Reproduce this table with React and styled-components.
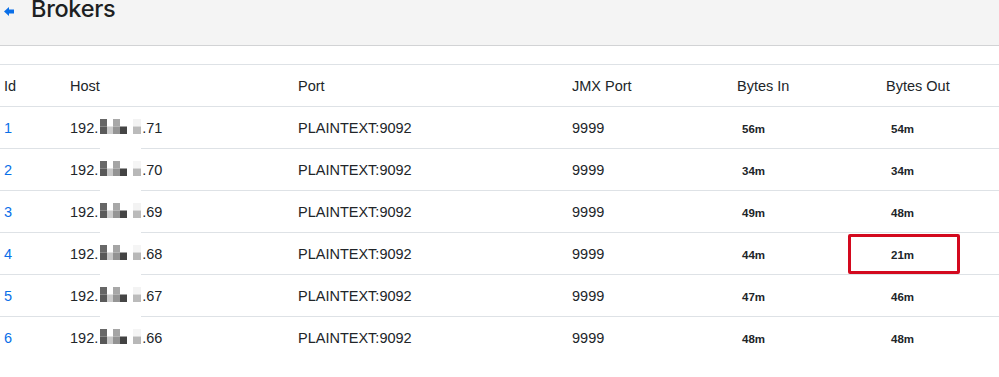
import React from "react"
import styled, { createGlobalStyle } from "styled-components"

const GlobalStyle = createGlobalStyle`
  body {
    margin: 0;
    background: #fff;
    font-family: "Liberation Sans", Arial, sans-serif;
    color: #212529;
  }
`

const Page = styled.div`
  width: 999px;
  height: 377px;
  overflow: hidden;
  background: #fff;
`

const Header = styled.div`
  height: 45px;
  background: #f4f4f4;
  border-bottom: 1px solid #d2d3d5;
  display: flex;
  align-items: flex-start;
  padding-left: 4px;
`

const Back = styled.svg`
  width: 10px;
  height: 9px;
  margin-top: 7px;
  margin-right: 17px;
  flex: none;
`

const Title = styled.h1`
  margin: 0;
  font-family: Inter, "Liberation Sans", sans-serif;
  font-size: 23.5px;
  line-height: 17px;
  font-weight: 500;
  letter-spacing: -0.3px;
  color: #1d1f22;
`

const Spacer = styled.div`
  height: 18px;
`

const Table = styled.div`
  display: flex;
  flex-direction: column;
  font-size: 14.5px;
`

const Row = styled.div`
  display: grid;
  grid-template-columns: 66px 228px 274px 165px 149px 1fr;
  height: 41px;
  border-top: ${p => (p.$head ? "1px solid #dee2e6" : "none")};
  border-bottom: ${p => (p.$last ? "none" : "1px solid #dee2e6")};
`

const Cell = styled.div`
  position: relative;
  display: flex;
  align-items: center;
  padding-left: 4px;
  white-space: nowrap;
`

const IdLink = styled.a`
  color: #0a6fe8;
  text-decoration: none;
`

const Bytes = styled.span`
  padding: 3px 0 0 5px;
  font-size: 11.5px;
  font-weight: 700;
`

const MosaicBox = styled.span`
  position: relative;
  display: inline-block;
  width: 41px;
  height: 15px;
  margin: -3px 1px 0 2px;
  align-self: center;
`

const MosaicSvg = styled.svg`
  position: absolute;
  left: 0;
  top: 0;
  width: 41px;
  height: 34px;
`

const Highlight = styled.div`
  position: absolute;
  left: -34px;
  top: 1px;
  width: 112px;
  height: 40px;
  box-sizing: border-box;
  border: 3px solid #d3091e;
  border-radius: 2px;
  pointer-events: none;
`

const palettes = [
  ["#666666", "#5a5a5a", "#fff", "#cccccc", "#a8a8a8", "#959595", "#fff", "#454545", "#fff", "#fff", "#f3f3f3", "#bbbbbb"],
  ["#686868", "#585858", "#fff", "#c8c8c8", "#a5a5a5", "#939393", "#fff", "#434343", "#fff", "#fff", "#f5f5f5", "#b8b8b8"],
]

const Mosaic = ({ v }) => {
  const c = palettes[v % 2]
  const xs = [0, 7, 13, 20, 27, 33]
  const ws = [7, 6, 7, 7, 6, 8]
  return (
    <MosaicBox>
      <MosaicSvg viewBox="0 0 41 34">
        <rect x="0" y="0" width="41" height="34" fill="#fff" />
        {xs.map((x, i) => (
          <g key={i}>
            <rect x={x} y="0" width={ws[i]} height="7.5" fill={c[i * 2]} />
            <rect x={x} y="7.5" width={ws[i]} height="7.5" fill={c[i * 2 + 1]} />
          </g>
        ))}
      </MosaicSvg>
    </MosaicBox>
  )
}

const brokers = [
  { id: 1, host: "71", bin: "56m", bout: "54m" },
  { id: 2, host: "70", bin: "34m", bout: "34m" },
  { id: 3, host: "69", bin: "49m", bout: "48m" },
  { id: 4, host: "68", bin: "44m", bout: "21m", flag: true },
  { id: 5, host: "67", bin: "47m", bout: "46m" },
  { id: 6, host: "66", bin: "48m", bout: "48m" },
]

const App = () => {
  return (
    <Page>
      <GlobalStyle />
      <Header>
        <Back viewBox="0 0 10 9">
          <path d="M0 4.5 L5 0 L5 2.6 L10 2.6 L10 6.4 L5 6.4 L5 9 Z" fill="#0a6fe8" />
        </Back>
        <Title>Brokers</Title>
      </Header>
      <Spacer />
      <Table>
        <Row $head>
          <Cell>Id</Cell>
          <Cell>Host</Cell>
          <Cell>Port</Cell>
          <Cell>JMX Port</Cell>
          <Cell>Bytes In</Cell>
          <Cell>Bytes Out</Cell>
        </Row>
        {brokers.map((b, i) => (
          <Row key={b.id} $last={i === brokers.length - 1}>
            <Cell>
              <IdLink href="#">{b.id}</IdLink>
            </Cell>
            <Cell>
              192.<Mosaic v={i} />.{b.host}
            </Cell>
            <Cell>PLAINTEXT:9092</Cell>
            <Cell>9999</Cell>
            <Cell>
              <Bytes>{b.bin}</Bytes>
            </Cell>
            <Cell>
              <Bytes>{b.bout}</Bytes>
              {b.flag && <Highlight />}
            </Cell>
          </Row>
        ))}
      </Table>
    </Page>
  )
}

export default App
